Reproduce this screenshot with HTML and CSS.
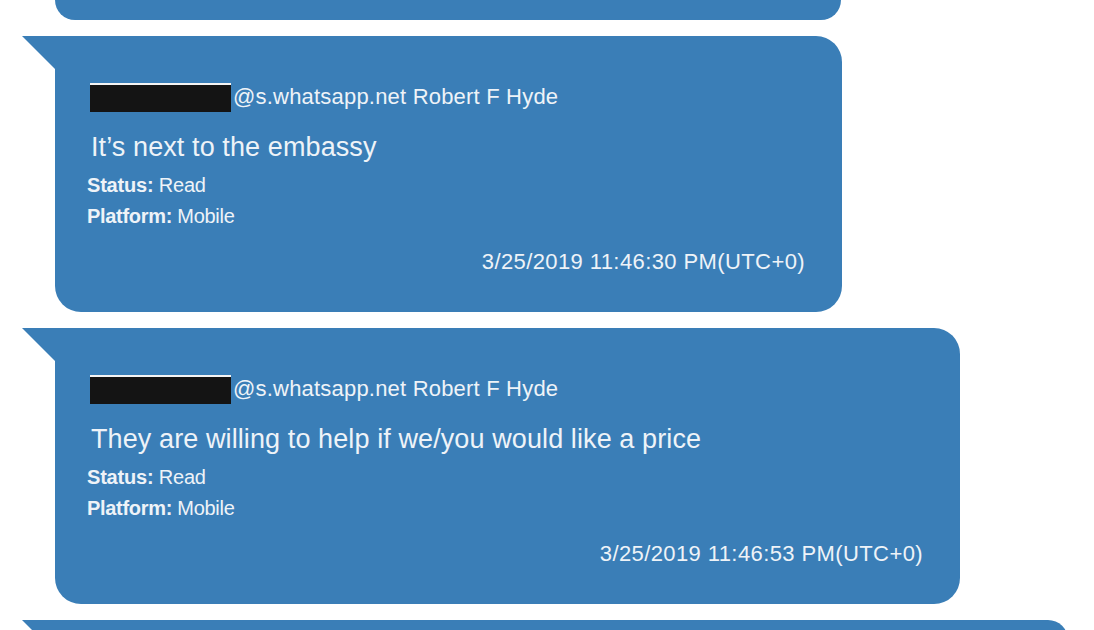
FILE: index.html
```html
<!DOCTYPE html>
<html>
<head>
<meta charset="utf-8">
<link rel="stylesheet" href="styles.css">
</head>
<body>
<div class="thread">
  <div class="bubble prev"></div>

  <div class="bubble w1">
    <div class="sender"><span class="redact"></span>@s.whatsapp.net Robert F Hyde</div>
    <div class="body">It’s next to the embassy</div>
    <div class="meta status"><b>Status:</b> Read</div>
    <div class="meta platform"><b>Platform:</b> Mobile</div>
    <div class="time">3/25/2019 11:46:30 PM(UTC+0)</div>
  </div>

  <div class="bubble w2">
    <div class="sender"><span class="redact"></span>@s.whatsapp.net Robert F Hyde</div>
    <div class="body">They are willing to help if we/you would like a price</div>
    <div class="meta status"><b>Status:</b> Read</div>
    <div class="meta platform"><b>Platform:</b> Mobile</div>
    <div class="time">3/25/2019 11:46:53 PM(UTC+0)</div>
  </div>

  <div class="bubble w3 next"></div>
</div>
</body>
</html>
```

FILE: styles.css
```css
html, body {
  margin: 0;
  padding: 0;
  background: #ffffff;
  overflow: hidden;
}
.thread {
  display: flex;
  flex-direction: column;
  align-items: flex-start;
  gap: 16px;
  padding-left: 55px;
  font-family: "Liberation Sans", Arial, sans-serif;
  color: #eef3f8;
}
.bubble {
  position: relative;
  background: #3a7eb7;
  border-radius: 0 26px 26px 26px;
  box-sizing: border-box;
  padding: 45px 37px 0 35px;
  height: 276px;
}
.bubble::before {
  content: "";
  position: absolute;
  left: -33px;
  top: 0;
  width: 0;
  height: 0;
  border-top: 33px solid #3a7eb7;
  border-left: 33px solid transparent;
}
.prev {
  width: 786px;
  height: 20px;
  padding: 0;
  border-radius: 0 0 26px 26px;
}
.prev::before { display: none; }
.w1 { width: 787px; }
.w2 { width: 905px; }
.w3 { width: 1013px; height: 40px; padding: 0; }
.sender {
  display: flex;
  align-items: center;
  font-size: 22px;
  letter-spacing: 0.2px;
  height: 30px;
  margin-top: 1px;
}
.redact {
  display: inline-block;
  width: 141px;
  height: 29px;
  background: #141414;
  border-top: 2px solid #f4f4f4;
  box-sizing: border-box;
  margin-right: 2px;
}
.body {
  font-size: 27px;
  letter-spacing: 0.1px;
  margin-top: 19px;
  margin-left: 1px;
  line-height: 32px;
}
.meta {
  font-size: 20px;
  line-height: 31px;
  margin-left: -3px;
}
.status { margin-top: 7px; letter-spacing: -0.2px; }
.platform { letter-spacing: -0.3px; }
.meta b { font-weight: bold; }
.time {
  text-align: right;
  font-size: 22px;
  line-height: 26px;
  letter-spacing: 0.4px;
  margin-top: 17px;
}
```
